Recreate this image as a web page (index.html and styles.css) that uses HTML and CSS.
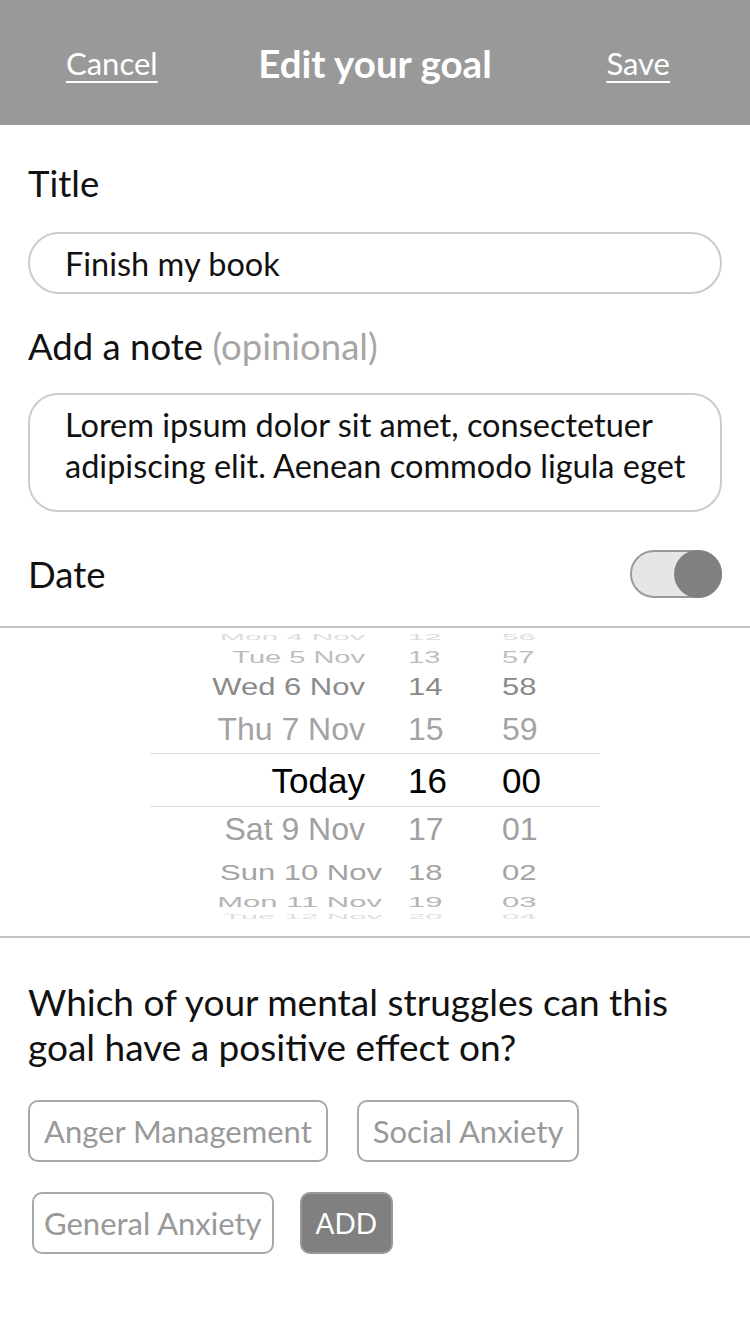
FILE: index.html
```html
<!DOCTYPE html>
<html lang="en">
<head>
<meta charset="utf-8">
<title>Edit your goal</title>
<link rel="stylesheet" href="styles.css">
</head>
<body>
<header class="topbar">
  <a class="topbar-link topbar-cancel" href="#">Cancel</a>
  <h1 class="topbar-title">Edit your goal</h1>
  <a class="topbar-link topbar-save" href="#">Save</a>
</header>

<main>
  <section class="form">
    <div class="label label-title">Title</div>
    <div class="field field-single">Finish my book</div>

    <div class="label label-note">Add a note <span class="label-muted">(opinional)</span></div>
    <div class="field field-multi">Lorem ipsum dolor sit amet, consectetuer<br>adipiscing elit. Aenean commodo ligula eget</div>

    <div class="date-row">
      <div class="label">Date</div>
      <div class="toggle"><span class="toggle-knob"></span></div>
    </div>
  </section>

  <section class="picker">
    <div class="picker-inner">
      <div class="prow r-m4"><span class="pd">Mon 4 Nov</span><span class="ph">12</span><span class="pm">56</span></div>
      <div class="prow r-t5"><span class="pd">Tue 5 Nov</span><span class="ph">13</span><span class="pm">57</span></div>
      <div class="prow r-w6"><span class="pd">Wed 6 Nov</span><span class="ph">14</span><span class="pm">58</span></div>
      <div class="prow r-th7"><span class="pd">Thu 7 Nov</span><span class="ph">15</span><span class="pm">59</span></div>
      <div class="prow r-today"><span class="pd">Today</span><span class="ph">16</span><span class="pm">00</span></div>
      <div class="prow r-s9"><span class="pd">Sat 9 Nov</span><span class="ph">17</span><span class="pm">01</span></div>
      <div class="prow r-su10 wide"><span class="pd">Sun 10 Nov</span><span class="ph">18</span><span class="pm">02</span></div>
      <div class="prow r-m11 wide"><span class="pd">Mon 11 Nov</span><span class="ph">19</span><span class="pm">03</span></div>
      <div class="prow r-t12 wide"><span class="pd">Tue 12 Nov</span><span class="ph">20</span><span class="pm">04</span></div>
    </div>
  </section>

  <section class="struggles">
    <p class="question">Which of your mental struggles can this<br>goal have a positive effect on?</p>
    <div class="chips">
      <div class="chip-row">
        <span class="chip">Anger Management</span>
        <span class="chip">Social Anxiety</span>
      </div>
      <div class="chip-row chip-row-2">
        <span class="chip chip-tight">General Anxiety</span>
        <span class="chip chip-add">ADD</span>
      </div>
    </div>
  </section>
</main>
</body>
</html>
```

FILE: styles.css
```css
* { box-sizing: border-box; }

html, body {
  margin: 0;
  padding: 0;
  background: #ffffff;
}

body {
  width: 750px;
  min-height: 1334px;
  font-family: "Lato", "Open Sans", sans-serif;
  color: #111111;
}

/* ---------- Top bar ---------- */
.topbar {
  height: 125px;
  background: #999999;
  display: grid;
  grid-template-columns: 1fr auto 1fr;
  align-items: center;
  padding: 0 66px 0 66px;
  color: #ffffff;
}

.topbar-link {
  color: #ffffff;
  font-size: 31px;
  text-decoration: underline;
  text-decoration-thickness: 2px;
  text-underline-offset: 6px;
  justify-self: start;
}

.topbar-save {
  justify-self: end;
  margin-right: 14px;
}

.topbar-title {
  margin: 0;
  font-size: 38.5px;
  font-weight: 700;
  color: #ffffff;
}

/* ---------- Form ---------- */
.form {
  padding: 36px 28px 0 28px;
}

.label {
  font-size: 36.5px;
  line-height: 44px;
  color: #111111;
}

.label-muted { color: #a6a6a6; }

.field {
  border: 2px solid #cccccc;
  font-size: 32.5px;
  color: #111111;
  white-space: nowrap;
}

.field-single {
  margin-top: 27px;
  height: 62px;
  border-radius: 31px;
  padding: 0 35px;
  display: flex;
  align-items: center;
}

.label-note { margin-top: 30px; }

.field-multi {
  margin-top: 25px;
  height: 119px;
  border-radius: 30px;
  padding: 9px 35px;
  line-height: 41px;
}

.date-row {
  margin-top: 38px;
  display: flex;
  justify-content: space-between;
  align-items: center;
}

.toggle {
  width: 92px;
  height: 48px;
  border: 2px solid #9a9a9a;
  border-radius: 24px;
  background: #e6e6e6;
  display: flex;
  justify-content: flex-end;
  align-items: center;
}

.toggle-knob {
  width: 48px;
  height: 48px;
  margin-right: -2px;
  border-radius: 50%;
  background: #808080;
}

/* ---------- Picker ---------- */
.picker {
  margin-top: 28px;
  border-top: 2px solid #c4c4c4;
  border-bottom: 2px solid #c4c4c4;
  padding-bottom: 14px;
  overflow: hidden;
}

.picker-inner {
  width: 450px;
  margin: 0 auto;
  font-family: "Liberation Sans", Arial, sans-serif;
}

.prow {
  display: grid;
  grid-template-columns: 258px 94px 1fr;
  align-items: center;
  overflow: hidden;
  white-space: nowrap;
}

.prow > span {
  display: block;
  transform-origin: center;
}

.pd {
  text-align: right;
  padding-right: 43px;
}

.prow.wide .pd { padding-right: 26px; }

.r-m4   { height: 18px; line-height: 18px; font-size: 30px; color: #dcdcdc; }
.r-m4 > span   { transform: scaleY(0.3); }

.r-t5   { height: 22px; line-height: 22px; font-size: 29px; color: #bdbdbd; }
.r-t5 > span   { transform: scaleY(0.58); }

.r-w6   { height: 37px; line-height: 37px; font-size: 31px; color: #8a8a8a; }
.r-w6 > span   { transform: scaleY(0.8); }

.r-th7  { height: 48px; line-height: 48px; font-size: 32px; color: #a3a3a3; }

.r-today {
  height: 54px;
  line-height: 54px;
  font-size: 35px;
  color: #000000;
  border-top: 1px solid #dddddd;
  border-bottom: 1px solid #dddddd;
}

.r-s9   { height: 45px; line-height: 45px; font-size: 32px; color: #a0a0a0; }

.r-su10 { height: 42px; line-height: 42px; font-size: 31px; color: #a3a3a3; }
.r-su10 > span { transform: scaleY(0.7); }

.r-m11  { height: 16px; line-height: 16px; font-size: 31px; color: #b5b5b5; }
.r-m11 > span  { transform: scaleY(0.5); }

.r-t12  { height: 12px; line-height: 12px; font-size: 31px; color: #dedede; }
.r-t12 > span  { transform: scaleY(0.25); }

/* ---------- Struggles ---------- */
.struggles {
  padding: 0 28px;
}

.question {
  margin: 41px 0 0 0;
  font-size: 37px;
  line-height: 45px;
  color: #111111;
}

.chips {
  margin-top: 31px;
  display: flex;
  flex-direction: column;
  gap: 30px;
}

.chip-row {
  display: flex;
  gap: 29px;
}

.chip-row-2 { padding-left: 4px; gap: 26px; }

.chip {
  height: 62px;
  display: flex;
  align-items: center;
  padding: 0 14px;
  border: 2px solid #a8a8a8;
  border-radius: 10px;
  font-size: 31px;
  color: #999999;
}

.chip-tight { padding: 0 10px; }

.chip-add {
  padding: 0 14px;
  font-size: 28px;
  background: #808080;
  border-color: #999999;
  color: #ffffff;
}
```
